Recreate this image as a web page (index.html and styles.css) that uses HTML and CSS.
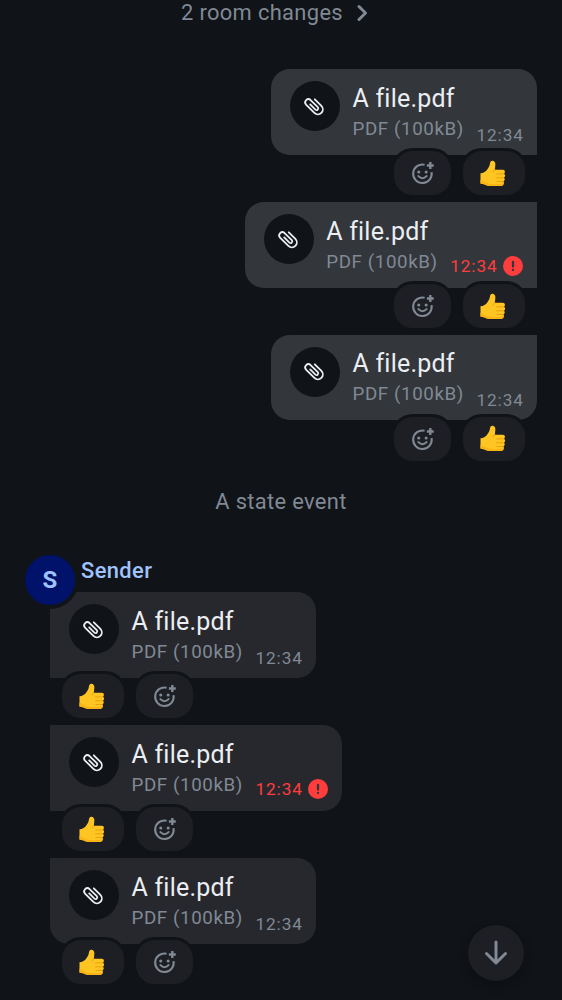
FILE: index.html
```
<!DOCTYPE html>
<html lang="en">
<head>
<meta charset="utf-8">
<title>Timeline</title>
<link rel="stylesheet" href="styles.css">
</head>
<body>
<svg class="defs" aria-hidden="true">
  <symbol id="clip" viewBox="0 0 30 30"><path d="M15.800 7.300 22.400 13.900A4.950 4.950 0 0 1 15.400 20.900L7.040 12.560A3.200 3.200 0 0 1 11.560 8.040L18.800 15.200A1.700 1.700 0 0 1 16.400 17.600L11.200 12.400" fill="none" stroke="currentColor" stroke-width="1.800" stroke-linecap="round"/></symbol>
  <symbol id="react" viewBox="0 0 24 24"><path d="M14 3.600A8.900 8.900 0 1 0 20.700 10.700" fill="none" stroke="currentColor" stroke-width="2"/><path d="M19.500 1v6.600M16.200 4.300h6.600" fill="none" stroke="currentColor" stroke-width="2.300"/><circle cx="8.400" cy="10.500" r="1.500" fill="currentColor"/><circle cx="15.500" cy="10.500" r="1.500" fill="currentColor"/><path d="M8.100 14.500q3.900 4 7.800 0" fill="none" stroke="currentColor" stroke-width="2" stroke-linecap="round"/></symbol>
  <symbol id="thumb" viewBox="0 0 26 28">
    <path d="M.5 13.300Q5 13 7.400 9.300C9.300 6.500 9.600 5.600 10 3.200 10.300 1.200 11.200.4 12.700.7c2.300.5 3 2.400 2.600 4.800L14.800 9.800h7.900c1.500 0 2.200.8 2.200 2 0 1-.3 1.600-.9 2 .8.5 1.200 1.200 1.100 2-.1 1-.5 1.600-1.200 1.900.7.5 1 1.200.8 2-.2.900-.6 1.400-1.300 1.700.5.5.7 1.100.5 1.800-.4 1.800-1.400 2.800-3.200 2.800h-7.500C9 26 6.500 25.500 4.800 24.400L.5 23.400z" fill="#ffc522"/>
    <path d="M.5 19.500c4 2.500 6.500 4.200 11 4.600 4.500.4 8.500.2 12.300-1-.3 1.900-1.300 2.900-3.100 2.900h-7.500C9 26 6.500 25.500 4.800 24.400L.5 23.400z" fill="#fdb314"/>
    <path d="M14.800 9.800q-1.700.7-1.800 2.200M23.800 13.900h-7.300M23.500 17.800h-7M22.800 21.500h-6" fill="none" stroke="#e59a08" stroke-width=".8" stroke-linecap="round"/>
  </symbol>
  <symbol id="error" viewBox="0 0 20 20"><circle cx="10" cy="10" r="10" fill="#ff3d3d"/><path d="M10 6v4.500M10 13.900v.1" stroke="#33363b" stroke-width="2.300" stroke-linecap="round"/></symbol>
</svg>
<main class="timeline">
  <div class="changes">2 room changes <svg class="chevron" viewBox="0 0 12 18"><path d="M2 2.500 8.500 9 2 15.500" fill="none" stroke="currentColor" stroke-width="3" stroke-linecap="round" stroke-linejoin="round"/></svg></div>

  <section class="group mine">
    <article class="message">
      <div class="bubble"><span class="file-icon"><svg><use href="#clip"/></svg></span><div class="file"><div class="name">A file.pdf</div><div class="meta">PDF (100kB)</div></div><div class="time">12:34</div></div>
      <div class="reactions"><span class="pill add"><svg><use href="#react"/></svg></span><span class="pill like"><svg><use href="#thumb"/></svg></span></div>
    </article>
    <article class="message">
      <div class="bubble"><span class="file-icon"><svg><use href="#clip"/></svg></span><div class="file"><div class="name">A file.pdf</div><div class="meta">PDF (100kB)</div></div><div class="time failed">12:34<svg><use href="#error"/></svg></div></div>
      <div class="reactions"><span class="pill add"><svg><use href="#react"/></svg></span><span class="pill like"><svg><use href="#thumb"/></svg></span></div>
    </article>
    <article class="message">
      <div class="bubble"><span class="file-icon"><svg><use href="#clip"/></svg></span><div class="file"><div class="name">A file.pdf</div><div class="meta">PDF (100kB)</div></div><div class="time">12:34</div></div>
      <div class="reactions"><span class="pill add"><svg><use href="#react"/></svg></span><span class="pill like"><svg><use href="#thumb"/></svg></span></div>
    </article>
  </section>

  <div class="state">A state event</div>

  <section class="group theirs">
    <header class="sender"><span class="avatar">S</span><span class="sender-name">Sender</span></header>
    <article class="message">
      <div class="bubble first"><span class="file-icon"><svg><use href="#clip"/></svg></span><div class="file"><div class="name">A file.pdf</div><div class="meta">PDF (100kB)</div></div><div class="time">12:34</div></div>
      <div class="reactions"><span class="pill like"><svg><use href="#thumb"/></svg></span><span class="pill add"><svg><use href="#react"/></svg></span></div>
    </article>
    <article class="message">
      <div class="bubble"><span class="file-icon"><svg><use href="#clip"/></svg></span><div class="file"><div class="name">A file.pdf</div><div class="meta">PDF (100kB)</div></div><div class="time failed">12:34<svg><use href="#error"/></svg></div></div>
      <div class="reactions"><span class="pill like"><svg><use href="#thumb"/></svg></span><span class="pill add"><svg><use href="#react"/></svg></span></div>
    </article>
    <article class="message">
      <div class="bubble last"><span class="file-icon"><svg><use href="#clip"/></svg></span><div class="file"><div class="name">A file.pdf</div><div class="meta">PDF (100kB)</div></div><div class="time">12:34</div></div>
      <div class="reactions"><span class="pill like"><svg><use href="#thumb"/></svg></span><span class="pill add"><svg><use href="#react"/></svg></span></div>
    </article>
  </section>
  <button class="jump" aria-label="Jump to bottom"><svg viewBox="0 0 24 26"><path d="M12 2v21M2.500 13.500 12 23l9.500-9.500" fill="none" stroke="currentColor" stroke-width="3" stroke-linecap="round" stroke-linejoin="round"/></svg></button>
</main>
</body>
</html>
```
FILE: styles.css
```
* { box-sizing: border-box; }
body { margin: 0; background: #101317; color: #ebeef2; font-family: Roboto, sans-serif; }
svg { display: block; }
.defs { position: absolute; width: 0; height: 0; }
.timeline { position: relative; height: 1000px; overflow: hidden; }
.changes, .state { color: #808994; font-size: 21.9px; letter-spacing: .34px; white-space: nowrap; }
.changes { display: flex; align-items: center; justify-content: center; gap: 14px; height: 25px; padding-right: 12px; }
.chevron { width: 12px; height: 18px; }
.group { display: flex; flex-direction: column; }
.mine { align-items: flex-end; padding: 44px 25px 0 0; }
.message { height: 132.75px; display: flex; flex-direction: column; }
.mine .message { align-items: flex-end; }
.theirs .message { align-items: flex-start; }
.bubble { display: flex; width: 266px; height: 85.800px; padding: 12.900px 13px 0 19px; background: #33363b; border-radius: 19px 0 0 19px; white-space: nowrap; }
.bubble:has(.failed) { width: 292.300px; padding-right: 12px; }
.mine .message:first-child .bubble { border-radius: 19px 19px 0 19px; }
.mine .message:last-child .bubble { border-radius: 19px 0 19px 19px; }
.file-icon { display: flex; align-items: center; justify-content: center; flex: none; width: 50px; height: 50px; margin-top: -.700px; border-radius: 50%; background: #101317; }
.file-icon svg { width: 30px; height: 30px; margin: 1.500px 1.500px 0 0; }
.file { flex: none; width: 112px; margin-left: 12.500px; }
.name { font-size: 25px; line-height: 34px; letter-spacing: .22px; }
.meta { color: #808994; font-size: 18.750px; line-height: 26px; letter-spacing: .6px; }
.time { display: flex; gap: 6px; height: 20px; margin: 42.900px 0 0 12px; color: #808994; font-size: 17.200px; line-height: 20px; letter-spacing: .9px; }
.failed { margin-top: 41.100px; gap: 5px; color: #ff3d3d; }
.failed svg { width: 20px; height: 20px; }
.reactions { display: flex; gap: 6px; margin-top: -6.800px; }
.mine .reactions { margin-right: 9px; }
.theirs .reactions { margin-left: 9px; }
.pill { display: flex; align-items: center; justify-content: center; height: 50px; border: 3px solid #101317; border-radius: 22px; background: #1d1f24; }
.add { width: 63px; color: #808994; }
.like { width: 68px; }
.add svg { width: 25px; height: 25px; margin-top: 1px; }
.like svg { width: 26px; height: 28px; margin-top: 1.500px; }
.mine .like svg { margin-right: 2px; }
.theirs .like svg { margin-right: 1.500px; }
.state { display: flex; justify-content: center; height: 26px; margin-top: 22px; line-height: 26px; }
.theirs { padding: 36px 0 0 50px; }
.theirs .bubble { background: #27282d; border-radius: 0; }
.theirs .first { border-radius: 0 19px 19px 0; }
.theirs .bubble:has(.failed) { width: 292px; border-radius: 0 19px 19px 0; }
.theirs .last { border-radius: 0 19px 19px 19px; }
.sender { position: relative; z-index: 1; display: flex; height: 41px; margin-left: -29px; }
.avatar { display: flex; align-items: center; justify-content: center; flex: none; width: 58px; height: 58px; border: 4px solid #101317; border-radius: 50%; background: #00126a; color: #9fc3ff; font-size: 24px; font-weight: 700; }
.sender-name { margin: 7px 0 0 2px; color: #9fc3ff; font-size: 21.900px; font-weight: 500; line-height: 26px; letter-spacing: .4px; }
.jump { position: absolute; right: 38px; bottom: 19px; display: flex; align-items: center; justify-content: center; width: 56px; height: 56px; padding: 0; border: 0; border-radius: 50%; background: #1d1f24; color: #808994; box-shadow: 0 4px 9px #0b0d1088; }
.jump svg { width: 24px; height: 26px; }
```
